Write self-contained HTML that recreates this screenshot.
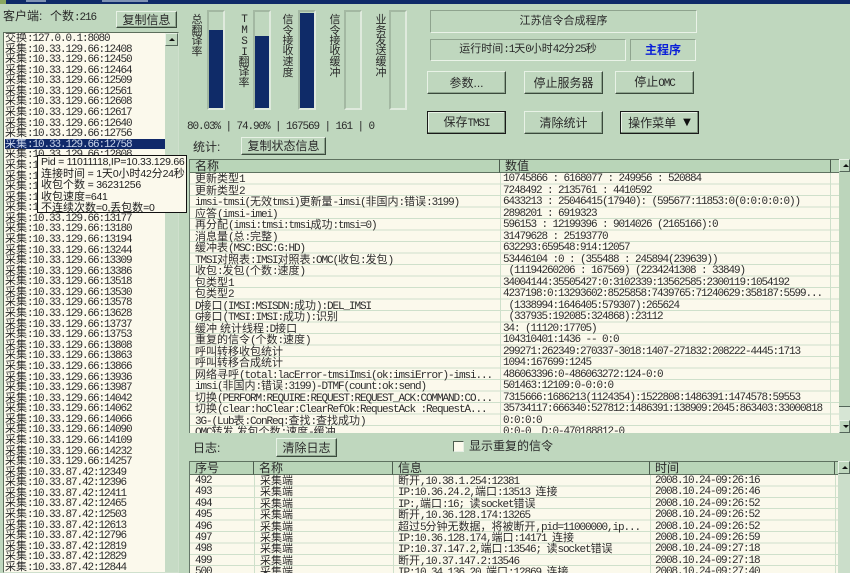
<!DOCTYPE html>
<html lang="zh"><head><meta charset="utf-8"><title>江苏信令合成程序</title>
<style>
html,body{margin:0;padding:0}
body{width:850px;height:573px;overflow:hidden;position:relative;background:#bfd7be;font:11px/1 "Liberation Mono","Noto Sans CJK SC",monospace;letter-spacing:-1.1px;color:#2a2a2a}
div{box-sizing:border-box}
b{font-weight:400;font-size:11px;font-family:"Liberation Sans","Noto Sans CJK SC",sans-serif;letter-spacing:0;line-height:1}
.a{position:absolute;white-space:nowrap}
.btn{position:absolute;background:#bfd7be;border:1px solid;border-color:#e8f2e6 #3a4a3c #3a4a3c #e8f2e6;box-shadow:inset -1px -1px 0 #8fa58f;text-align:center;display:flex;align-items:center;justify-content:center;white-space:nowrap}
.btn b{font-size:12px}
.blk{border:1px solid #1a1a1a;box-shadow:inset -1px -1px 0 #7d927d,inset 1px 1px 0 #e8f2e6}
.sunk{position:absolute;border:1px solid;border-color:#8ea38e #eaf3e8 #eaf3e8 #8ea38e;text-align:center;display:flex;align-items:center;justify-content:center;white-space:nowrap}
.frame{position:absolute;top:10px;height:100px;width:18px;border:2px solid;border-color:#a3b8a2 #dfeadd #dfeadd #a3b8a2}
.fill{position:absolute;left:0;right:0;bottom:0;background:#0f2b68}
.v{position:absolute;width:14px;text-align:center}
.v div{position:absolute;left:0;width:14px;height:11px;line-height:11px}
.list{position:absolute;left:3px;top:32px;width:176px;height:541px;background:#fbf9ec;border:1px solid;border-color:#5c6e5c #cfe0cd #cfe0cd #5c6e5c;overflow:hidden}
.list .r{position:absolute;left:1px;top:0;width:160px}
.list .r div{height:10.58px;line-height:10.58px;white-space:nowrap;color:#2c2c2c}
.list .r div.s{background:#10296a;color:#c9d4ea}
.list .r div.s b{color:#c9d4ea}
.sb{position:absolute;background:#cbdeca}
.up,.dn{position:absolute;left:0;right:0;height:13px;background:#bfd7be;border:1px solid;border-color:#e8f2e6 #54665a #54665a #e8f2e6}
.up:after,.dn:after{content:"";position:absolute;left:3px;width:0;height:0;border-left:3px solid transparent;border-right:3px solid transparent}
.up:after{top:4px;border-bottom:3px solid #111}
.dn:after{top:4px;border-top:3px solid #111}
.tb{position:absolute;background:#fbf9ec;overflow:hidden;border-left:1px solid #66786a}
.hd{position:absolute;top:0;height:14px;background:#b9d5b8;border-bottom:1px solid #5f7260;border-top:1px solid #5f7260;border-right:1px solid #4c5c4e;padding:0 0 0 5px;line-height:13px}
.hd b{font-size:12px}
.col{position:absolute;top:15px}
.col div{white-space:nowrap;color:#2c2c2c}
.t1 .col div{height:11.5px;line-height:11.5px}
.t2 .col div{height:11.4px;line-height:11.4px}
.t1 .grid{background:repeating-linear-gradient(to bottom,transparent 0,transparent 10.5px,#cfe0cb 10.5px,#cfe0cb 11.5px)}
.t2 .grid{background:repeating-linear-gradient(to bottom,transparent 0,transparent 10.4px,#cfe0cb 10.4px,#cfe0cb 11.4px)}
.grid{position:absolute;left:0;right:0;top:14px;bottom:0}
.vl{position:absolute;top:14px;bottom:0;width:1px;background:#cfe0cb}
.tip{position:absolute;left:37px;top:155px;width:150px;height:58px;background:#fbf9ec;border:1px solid #111;padding:1px 0 0 3px;font:10.5px "Liberation Sans","Noto Sans CJK SC",sans-serif;letter-spacing:-.25px;color:#1c1c1c}
.tip div{height:11.5px;line-height:11.5px;white-space:nowrap}
.tip b{font-size:11px;letter-spacing:0}
</style></head><body>
<div class="a" style="left:0;top:0;width:850px;height:4px;background:#0f2b68"></div>
<div class="a" style="left:0;top:0;width:6px;height:4px;background:#8aa860"></div>
<div class="a" style="left:26px;top:0;width:20px;height:2px;background:#7f93b4"></div>
<div class="a" style="left:102px;top:0;width:46px;height:2px;background:#7f93b4"></div>

<div class="a" style="left:3px;top:10px;line-height:13px"><b style="font-size:12px">客户端:</b></div>
<div class="a" style="left:50px;top:10px;line-height:13px"><b style="font-size:12px">个数</b><span style="font-size:11px">:216</span></div>
<div class="btn" style="left:116px;top:11px;width:61px;height:17px"><b>复制信息</b></div>

<div class="list"><div class="r">
<div><b>交换</b>:127.0.0.1:8080</div>
<div><b>采集</b>:10.33.129.66:12408</div>
<div><b>采集</b>:10.33.129.66:12450</div>
<div><b>采集</b>:10.33.129.66:12464</div>
<div><b>采集</b>:10.33.129.66:12509</div>
<div><b>采集</b>:10.33.129.66:12561</div>
<div><b>采集</b>:10.33.129.66:12608</div>
<div><b>采集</b>:10.33.129.66:12617</div>
<div><b>采集</b>:10.33.129.66:12640</div>
<div><b>采集</b>:10.33.129.66:12756</div>
<div class="s"><b>采集</b>:10.33.129.66:12758</div>
<div><b>采集</b>:10.33.129.66:12808</div>
<div><b>采集</b>:10.33.129.66:12850</div>
<div><b>采集</b>:10.33.129.66:12900</div>
<div><b>采集</b>:10.33.129.66:12950</div>
<div><b>采集</b>:10.33.129.66:13010</div>
<div><b>采集</b>:10.33.129.66:13100</div>
<div><b>采集</b>:10.33.129.66:13177</div>
<div><b>采集</b>:10.33.129.66:13180</div>
<div><b>采集</b>:10.33.129.66:13194</div>
<div><b>采集</b>:10.33.129.66:13244</div>
<div><b>采集</b>:10.33.129.66:13309</div>
<div><b>采集</b>:10.33.129.66:13386</div>
<div><b>采集</b>:10.33.129.66:13518</div>
<div><b>采集</b>:10.33.129.66:13530</div>
<div><b>采集</b>:10.33.129.66:13578</div>
<div><b>采集</b>:10.33.129.66:13628</div>
<div><b>采集</b>:10.33.129.66:13737</div>
<div><b>采集</b>:10.33.129.66:13753</div>
<div><b>采集</b>:10.33.129.66:13808</div>
<div><b>采集</b>:10.33.129.66:13863</div>
<div><b>采集</b>:10.33.129.66:13866</div>
<div><b>采集</b>:10.33.129.66:13936</div>
<div><b>采集</b>:10.33.129.66:13987</div>
<div><b>采集</b>:10.33.129.66:14042</div>
<div><b>采集</b>:10.33.129.66:14062</div>
<div><b>采集</b>:10.33.129.66:14066</div>
<div><b>采集</b>:10.33.129.66:14090</div>
<div><b>采集</b>:10.33.129.66:14109</div>
<div><b>采集</b>:10.33.129.66:14232</div>
<div><b>采集</b>:10.33.129.66:14257</div>
<div><b>采集</b>:10.33.87.42:12349</div>
<div><b>采集</b>:10.33.87.42:12396</div>
<div><b>采集</b>:10.33.87.42:12411</div>
<div><b>采集</b>:10.33.87.42:12465</div>
<div><b>采集</b>:10.33.87.42:12503</div>
<div><b>采集</b>:10.33.87.42:12613</div>
<div><b>采集</b>:10.33.87.42:12796</div>
<div><b>采集</b>:10.33.87.42:12819</div>
<div><b>采集</b>:10.33.87.42:12829</div>
<div><b>采集</b>:10.33.87.42:12844</div>
</div>
<div class="sb" style="left:161px;top:0;width:13px;bottom:0;background:#c6dbc5"><div class="up"></div></div>
</div>
<div class="tip">
<div>Pid = 11011118,IP=10.33.129.66</div>
<div><b>连接时间</b> = 1<b>天</b>0<b>小时</b>42<b>分</b>24<b>秒</b></div>
<div><b>收包个数</b> = 36231256</div>
<div><b>收包速度</b>=641</div>
<div><b>不连续次数</b>=0,<b>丢包数</b>=0</div>
</div>

<div class="frame" style="left:207px"><div class="fill" style="height:78px"></div></div>
<div class="frame" style="left:253px"><div class="fill" style="height:72px"></div></div>
<div class="frame" style="left:298px"><div class="fill" style="height:95px"></div></div>
<div class="frame" style="left:344px"></div>
<div class="frame" style="left:389px"></div>

<div class="v" style="left:190px;top:0"><div style="top:15px"><b>总</b></div><div style="top:26px"><b>翻</b></div><div style="top:36px"><b>译</b></div><div style="top:47px"><b>率</b></div></div>
<div class="v" style="left:237px;top:0"><div style="top:15px">T</div><div style="top:26px">M</div><div style="top:37px">S</div><div style="top:48px">I</div><div style="top:57px"><b>翻</b></div><div style="top:67px"><b>译</b></div><div style="top:78px"><b>率</b></div></div>
<div class="v" style="left:281px;top:0"><div style="top:15px"><b>信</b></div><div style="top:26px"><b>令</b></div><div style="top:36px"><b>接</b></div><div style="top:46px"><b>收</b></div><div style="top:57px"><b>速</b></div><div style="top:68px"><b>度</b></div></div>
<div class="v" style="left:328px;top:0"><div style="top:15px"><b>信</b></div><div style="top:26px"><b>令</b></div><div style="top:36px"><b>接</b></div><div style="top:46px"><b>收</b></div><div style="top:57px"><b>缓</b></div><div style="top:68px"><b>冲</b></div></div>
<div class="v" style="left:374px;top:0"><div style="top:15px"><b>业</b></div><div style="top:26px"><b>务</b></div><div style="top:36px"><b>发</b></div><div style="top:46px"><b>送</b></div><div style="top:57px"><b>缓</b></div><div style="top:68px"><b>冲</b></div></div>

<div class="a" style="left:187px;top:122px;line-height:11px;white-space:pre">80.03% | 74.90% | 167569 | 161 | 0</div>
<div class="a" style="left:193px;top:141px;line-height:13px"><b style="font-size:12px">统计:</b></div>
<div class="btn" style="left:241px;top:137px;width:85px;height:18px"><b>复制状态信息</b></div>

<div class="sunk" style="left:430px;top:10px;width:267px;height:23px"><b>江苏信令合成程序</b></div>
<div class="sunk" style="left:430px;top:39px;width:196px;height:22px"><span><b>运行时间</b>:1<b>天</b>0<b>小时</b>42<b>分</b>25<b>秒</b></span></div>
<div class="sunk" style="left:630px;top:39px;width:66px;height:22px"><b style="color:#0a1fd8;font-weight:700;font-size:12px">主程序</b></div>
<div class="btn" style="left:427px;top:71px;width:79px;height:23px"><b>参数...</b></div>
<div class="btn" style="left:524px;top:71px;width:79px;height:23px"><b>停止服务器</b></div>
<div class="btn" style="left:615px;top:71px;width:79px;height:23px"><span><b>停止</b>OMC</span></div>
<div class="btn blk" style="left:427px;top:111px;width:79px;height:23px"><span><b>保存</b>TMSI</span></div>
<div class="btn" style="left:524px;top:111px;width:79px;height:23px"><b>清除统计</b></div>
<div class="btn blk" style="left:620px;top:111px;width:79px;height:23px"><b>操作菜单</b><span style="font:10px 'DejaVu Sans';letter-spacing:0;margin-left:7px;color:#111">▼</span></div>

<div class="tb t1" style="left:189px;top:159px;width:650px;height:274px">
<div class="grid"></div>
<div class="hd" style="left:0;width:310px"><b>名称</b></div>
<div class="hd" style="left:310px;width:331px"><b>数值</b></div>
<div class="hd" style="left:641px;width:9px;border-right:0;padding:0"></div>
<div class="vl" style="left:310px"></div>
<div class="vl" style="left:640px"></div>
<div class="col" style="left:5px">
<div><b>更新类型</b>1</div>
<div><b>更新类型</b>2</div>
<div>imsi-tmsi(<b>无效</b>tmsi)<b>更新量</b>-imsi(<b>非国内</b>:<b>错误</b>:3199)</div>
<div><b>应答</b>(imsi-imei)</div>
<div><b>再分配</b>(imsi:tmsi:tmsi<b>成功</b>:tmsi=0)</div>
<div><b>消息量</b>(<b>总</b>:<b>完整</b>)</div>
<div><b>缓冲表</b>(MSC:BSC:G:HD)</div>
<div>TMSI<b>对照表</b>:IMSI<b>对照表</b>:OMC(<b>收包</b>:<b>发包</b>)</div>
<div><b>收包</b>:<b>发包</b>(<b>个数</b>:<b>速度</b>)</div>
<div><b>包类型</b>1</div>
<div><b>包类型</b>2</div>
<div>D<b>接口</b>(IMSI:MSISDN:<b>成功</b>):DEL_IMSI</div>
<div>G<b>接口</b>(TMSI:IMSI:<b>成功</b>):<b>识别</b></div>
<div><b>缓冲 统计线程</b>:D<b>接口</b></div>
<div><b>重复的信令</b>(<b>个数</b>:<b>速度</b>)</div>
<div><b>呼叫转移收包统计</b></div>
<div><b>呼叫转移合成统计</b></div>
<div><b>网络寻呼</b>(total:lacError-tmsiImsi(ok:imsiError)-imsi...</div>
<div>imsi(<b>非国内</b>:<b>错误</b>:3199)-DTMF(count:ok:send)</div>
<div><b>切换</b>(PERFORM:REQUIRE:REQUEST:REQUEST_ACK:COMMAND:CO...</div>
<div><b>切换</b>(clear:hoClear:ClearRefOk:RequestAck :RequestA...</div>
<div>3G-(Lub<b>表</b>:ConReq:<b>查找</b>:<b>查找成功</b>)</div>
<div>OMC<b>转发 发包个数</b>:<b>速度</b>-<b>缓冲</b></div>
</div>
<div class="col" style="left:313px">
<div style="white-space:pre">10745866 : 6168077 : 249956 : 520884</div>
<div style="white-space:pre">7248492 : 2135761 : 4410592</div>
<div style="white-space:pre">6433213 : 25046415(17940): (595677:11853:0(0:0:0:0:0))</div>
<div style="white-space:pre">2898201 : 6919323</div>
<div style="white-space:pre">596153 : 12199396 : 9014026 (2165166):0</div>
<div style="white-space:pre">31479628 : 25193770</div>
<div>632293:659548:914:12057</div>
<div style="white-space:pre">53446104 :0 : (355488 : 245894(239639))</div>
<div style="white-space:pre"> (11194260206 : 167569) (2234241308 : 33849)</div>
<div>34004144:35505427:0:3102339:13562585:2300119:1054192</div>
<div>4237198:0:13293602:8525858:7439765:71240629:358187:5599...</div>
<div style="white-space:pre"> (1338994:1646405:579307):265624</div>
<div style="white-space:pre"> (337935:192085:324868):23112</div>
<div style="white-space:pre">34: (11120:17705)</div>
<div style="white-space:pre">104310401:1436 -- 0:0</div>
<div>299271:262349:270337-3018:1407-271832:208222-4445:1713</div>
<div>1094:167699:1245</div>
<div>486063396:0-486063272:124-0:0</div>
<div>501463:12109:0-0:0:0</div>
<div>7315666:1686213(1124354):1522808:1486391:1474578:59553</div>
<div>35734117:666340:527812:1486391:138909:2045:863403:33000818</div>
<div>0:0:0:0</div>
<div style="white-space:pre">0:0-0  D:0-470188812-0</div>
</div>
</div>
<div class="a" style="left:839px;top:159px;width:11px;height:274px;background:#bcd5bb;white-space:normal">
<div class="a" style="left:0;top:247px;right:0;height:14px;background:#d6e5d4;border-top:1px solid #54665a"></div>
<div class="up" style="top:0"></div><div class="dn" style="top:261px"></div></div>

<div class="a" style="left:193px;top:442px;line-height:13px"><b style="font-size:12px">日志:</b></div>
<div class="btn" style="left:276px;top:438px;width:61px;height:19px"><b>清除日志</b></div>
<div class="a" style="left:453px;top:441px;width:11px;height:11px;background:#fbf9ec;border:1px solid;border-color:#4c5c4e #e6efe4 #e6efe4 #4c5c4e"></div>
<div class="a" style="left:469px;top:440px;line-height:13px"><b style="font-size:12px">显示重复的信令</b></div>

<div class="tb t2" style="left:189px;top:461px;width:649px;height:112px">
<div class="grid"></div>
<div class="hd" style="left:0;width:64px"><b>序号</b></div>
<div class="hd" style="left:64px;width:139px"><b>名称</b></div>
<div class="hd" style="left:203px;width:257px"><b>信息</b></div>
<div class="hd" style="left:460px;width:185px"><b>时间</b></div>
<div class="hd" style="left:645px;width:4px;border-right:0;padding:0"></div>
<div class="vl" style="left:64px"></div><div class="vl" style="left:203px"></div><div class="vl" style="left:460px"></div><div class="vl" style="left:645px"></div>
<div class="col" style="left:5px"><div>492</div><div>493</div><div>494</div><div>495</div><div>496</div><div>497</div><div>498</div><div>499</div><div>500</div></div>
<div class="col" style="left:70px"><div><b>采集端</b></div><div><b>采集端</b></div><div><b>采集端</b></div><div><b>采集端</b></div><div><b>采集端</b></div><div><b>采集端</b></div><div><b>采集端</b></div><div><b>采集端</b></div><div><b>采集端</b></div></div>
<div class="col" style="left:208px">
<div><b>断开</b>,10.38.1.254:12381</div>
<div>IP:10.36.24.2,<b>端口</b>:13513 <b>连接</b></div>
<div>IP:,<b>端口</b>:16; <b>读</b>socket<b>错误</b></div>
<div><b>断开</b>,10.36.128.174:13265</div>
<div><b>超过</b>5<b>分钟无数据，将被断开</b>,pid=11000000,ip...</div>
<div>IP:10.36.128.174,<b>端口</b>:14171 <b>连接</b></div>
<div>IP:10.37.147.2,<b>端口</b>:13546; <b>读</b>socket<b>错误</b></div>
<div><b>断开</b>,10.37.147.2:13546</div>
<div>IP:10.34.136.20,<b>端口</b>:12869 <b>连接</b></div>
</div>
<div class="col" style="left:465px">
<div>2008.10.24-09:26:16</div><div>2008.10.24-09:26:46</div><div>2008.10.24-09:26:52</div><div>2008.10.24-09:26:52</div><div>2008.10.24-09:26:52</div><div>2008.10.24-09:26:59</div><div>2008.10.24-09:27:18</div><div>2008.10.24-09:27:18</div><div>2008.10.24-09:27:40</div>
</div>
</div>
<div class="a" style="left:838px;top:461px;width:12px;height:112px;background:#cbdeca"><div class="up" style="top:0"></div></div>
</body></html>
